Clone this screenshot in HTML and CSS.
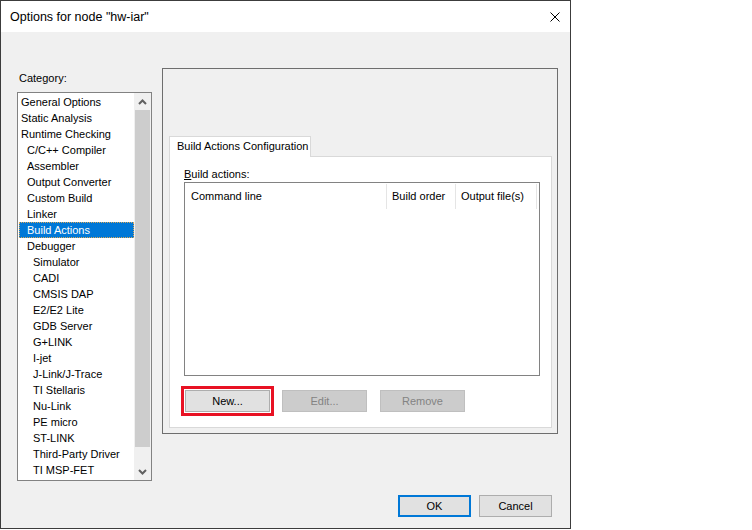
FILE: index.html
```html
<!DOCTYPE html>
<html lang="en">
<head>
    <meta charset="UTF-8">
    <title>Options for node "hw-iar"</title>
    <link rel="stylesheet" href="styles.css">
</head>
<body>
    <div class="dialog">
        <div class="titlebar">
            <span class="title">Options for node "hw-iar"</span>
            <span class="close">
                <svg width="10" height="10" viewBox="0 0 10 10"><path d="M0.5 0.5L9.5 9.5M9.5 0.5L0.5 9.5" stroke="#000" stroke-width="1" fill="none"/></svg>
            </span>
        </div>

        <div class="client">
            <div class="main">
                <div class="category">
                    <div class="label">Category:</div>
                    <div class="listbox">
                        <ul class="items">
                            <li>General Options</li>
                            <li>Static Analysis</li>
                            <li>Runtime Checking</li>
                            <li class="lvl1">C/C++ Compiler</li>
                            <li class="lvl1">Assembler</li>
                            <li class="lvl1">Output Converter</li>
                            <li class="lvl1">Custom Build</li>
                            <li class="lvl1">Linker</li>
                            <li class="lvl1 selected">Build Actions</li>
                            <li class="lvl1">Debugger</li>
                            <li class="lvl2">Simulator</li>
                            <li class="lvl2">CADI</li>
                            <li class="lvl2">CMSIS DAP</li>
                            <li class="lvl2">E2/E2 Lite</li>
                            <li class="lvl2">GDB Server</li>
                            <li class="lvl2">G+LINK</li>
                            <li class="lvl2">I-jet</li>
                            <li class="lvl2">J-Link/J-Trace</li>
                            <li class="lvl2">TI Stellaris</li>
                            <li class="lvl2">Nu-Link</li>
                            <li class="lvl2">PE micro</li>
                            <li class="lvl2">ST-LINK</li>
                            <li class="lvl2">Third-Party Driver</li>
                            <li class="lvl2">TI MSP-FET</li>
                        </ul>
                        <div class="vscroll">
                            <span class="arrow">
                                <svg width="9" height="6" viewBox="0 0 9 6"><path d="M1 5L4.5 1.5L8 5" stroke="#606060" stroke-width="2" fill="none"/></svg>
                            </span>
                            <span class="thumb"></span>
                            <span class="track"></span>
                            <span class="arrow">
                                <svg width="9" height="6" viewBox="0 0 9 6"><path d="M1 1L4.5 4.5L8 1" stroke="#606060" stroke-width="2" fill="none"/></svg>
                            </span>
                        </div>
                    </div>
                </div>

                <div class="groupbox">
                    <div class="tabs">
                        <div class="tab">Build Actions Configuration</div>
                    </div>
                    <div class="tabpage">
                        <div class="label"><u>B</u>uild actions:</div>
                        <div class="listview">
                            <div class="lv-header">
                                <div class="col c1">Command line</div>
                                <div class="col c2">Build order</div>
                                <div class="col c3">Output file(s)</div>
                            </div>
                        </div>
                        <div class="actions">
                            <button class="btn marked">New...</button>
                            <button class="btn" disabled>Edit...</button>
                            <button class="btn remove" disabled>Remove</button>
                        </div>
                    </div>
                </div>
            </div>

            <div class="footer">
                <button class="btn default">OK</button>
                <button class="btn">Cancel</button>
            </div>
        </div>
    </div>
</body>
</html>
```

FILE: styles.css
```css
* { box-sizing: border-box; }

body {
    margin: 0;
    background: #ffffff;
    font-family: "Liberation Sans", Arial, sans-serif;
    font-size: 11px;
    color: #000;
}

.dialog {
    width: 571px;
    height: 529px;
    border: 1px solid #3c3c3c;
    background: #f0f0f0;
    display: flex;
    flex-direction: column;
}

.titlebar {
    height: 31px;
    background: #fff;
    display: flex;
    align-items: center;
    justify-content: space-between;
    padding: 0 10px 0 9px;
}
.title { font-size: 12.5px; }
.close { display: flex; }
.close svg { display: block; }

.client {
    flex: 1;
    padding: 0 11px 0 16px;
    display: flex;
    flex-direction: column;
}

.main {
    display: flex;
    gap: 10px;
    padding-top: 36px;
}

.label { line-height: 16px; height: 16px; }

/* category list */
.category { width: 135px; padding-top: 2px; }
.category .label { margin-bottom: 6px; padding-left: 2px; }

.listbox {
    height: 389px;
    border: 1px solid #828282;
    background: #fff;
    display: flex;
}
.items {
    list-style: none;
    margin: 0;
    padding: 1px 0 0 1px;
    flex: 1;
}
.items li {
    height: 16px;
    line-height: 16px;
    padding-left: 2px;
    white-space: nowrap;
}
.items li.lvl1 { padding-left: 8px; }
.items li.lvl2 { padding-left: 14px; }
.items li.selected {
    background: #0078d7;
    color: #fff;
    outline: 1px dotted #d9a85a;
    outline-offset: -1px;
}

.vscroll {
    width: 17px;
    background: #f0f0f0;
    display: flex;
    flex-direction: column;
}
.vscroll .arrow {
    height: 17px;
    display: flex;
    align-items: center;
    justify-content: center;
}
.vscroll .thumb {
    height: 337px;
    margin: 0 1px;
    background: #cdcdcd;
}
.vscroll .track { flex: 1; }

/* right side */
.groupbox {
    width: 396px;
    height: 366px;
    border: 1px solid #6e6e6e;
    padding: 67px 5px 5px 6px;
    display: flex;
    flex-direction: column;
}
.tabs { height: 20px; display: flex; }
.tab {
    position: relative;
    z-index: 1;
    width: 142px;
    height: 21px;
    background: #fff;
    border: 1px solid #d9d9d9;
    border-bottom: none;
    padding-left: 7px;
    line-height: 19px;
}
.tabpage {
    flex: 1;
    background: #fff;
    border: 1px solid #d9d9d9;
    padding: 9px 0 0 14px;
}

.listview {
    width: 356px;
    height: 194px;
    border: 1px solid #828282;
    background: #fff;
}
.lv-header { display: flex; height: 26px; padding-top: 1px; }
.lv-header .col {
    border-right: 1px solid #e5e5e5;
    line-height: 24px;
    padding-left: 5px;
}
.lv-header .c1 { width: 202px; padding-left: 6px; }
.lv-header .c2 { width: 69px; }
.lv-header .c3 { width: 81px; }

.actions {
    display: flex;
    gap: 12px;
    margin-top: 14px;
    padding-left: 1px;
}

.btn {
    height: 22px;
    width: 85px;
    background: #e1e1e1;
    border: 1px solid #adadad;
    font-family: inherit;
    font-size: 11px;
    color: #000;
    padding: 0;
}
.btn:disabled {
    background: #cccccc;
    border-color: #bfbfbf;
    color: #838383;
}
.btn.remove { margin-left: 1px; }
.btn.marked {
    outline: 3px solid #e81123;
    outline-offset: 1px;
}

.footer {
    display: flex;
    justify-content: flex-end;
    gap: 8px;
    margin-top: 14px;
    padding-right: 7px;
}
.footer .btn { width: 73px; }
.btn.default { border: 2px solid #0078d7; }
```
